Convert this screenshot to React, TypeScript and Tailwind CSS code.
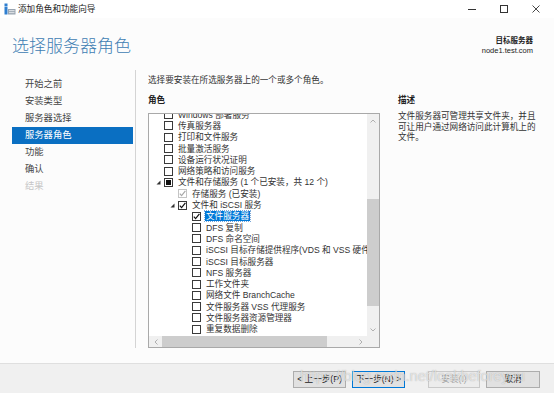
import React from "react";

type Row = {
  level: number;
  text: string;
  state?: "none" | "checked" | "indeterminate" | "disabledChecked";
  expander?: boolean;
  selected?: boolean;
};

const rows: Row[] = [
  { level: 0, text: "Windows 部署服务" },
  { level: 0, text: "传真服务器" },
  { level: 0, text: "打印和文件服务" },
  { level: 0, text: "批量激活服务" },
  { level: 0, text: "设备运行状况证明" },
  { level: 0, text: "网络策略和访问服务" },
  { level: 0, text: "文件和存储服务 (1 个已安装，共 12 个)", state: "indeterminate", expander: true },
  { level: 1, text: "存储服务 (已安装)", state: "disabledChecked" },
  { level: 1, text: "文件和 iSCSI 服务", state: "checked", expander: true },
  { level: 2, text: "文件服务器", state: "checked", selected: true },
  { level: 2, text: "DFS 复制" },
  { level: 2, text: "DFS 命名空间" },
  { level: 2, text: "iSCSI 目标存储提供程序(VDS 和 VSS 硬件提供程序)" },
  { level: 2, text: "iSCSI 目标服务器" },
  { level: 2, text: "NFS 服务器" },
  { level: 2, text: "工作文件夹" },
  { level: 2, text: "网络文件 BranchCache" },
  { level: 2, text: "文件服务器 VSS 代理服务" },
  { level: 2, text: "文件服务器资源管理器" },
  { level: 2, text: "重复数据删除" },
];

const padByLevel = ["pl-[4px]", "pl-[18px]", "pl-[32px]"];

function Check({ color }: { color: string }) {
  return (
    <svg width="9" height="9" viewBox="0 0 9 9" className="absolute left-[-1px] top-[-1px]">
      <path d="M1.8 4.6 L3.6 6.6 L7.4 1.8" fill="none" stroke={color} strokeWidth="1.2" />
    </svg>
  );
}

function CheckBox({ state }: { state: Row["state"] }) {
  if (state === "disabledChecked") {
    return (
      <div className="relative w-[9px] h-[9px] border border-[#c4c4c4] bg-white shrink-0">
        <Check color="#a8a8a8" />
      </div>
    );
  }
  return (
    <div className="relative w-[9px] h-[9px] border border-[#3a3a3a] bg-white shrink-0 flex items-center justify-center">
      {state === "checked" && <Check color="#111111" />}
      {state === "indeterminate" && <div className="w-[5px] h-[5px] bg-[#111111]" />}
    </div>
  );
}

function Expander({ show }: { show?: boolean }) {
  return (
    <div className="w-[11px] h-full flex items-center shrink-0">
      {show && (
        <svg width="5" height="5" viewBox="0 0 5 5" className="ml-[3px]">
          <polygon points="4.5,0.5 4.5,4.5 0.5,4.5" fill="#333333" />
        </svg>
      )}
    </div>
  );
}

export default function App() {
  return (
    <div
      className="relative w-[554px] h-[393px] flex flex-col bg-[#fcfcfc] text-[#1e1e1e] overflow-hidden"
      style={{ fontFamily: '"Liberation Sans", "Noto Sans CJK SC", sans-serif' }}
    >
      {/* Title bar */}
      <div className="h-[18px] bg-white flex items-center shrink-0">
        <svg width="12" height="12" viewBox="0 0 12 12" className="ml-[4px] mr-[2px]">
          <rect x="0.5" y="0.5" width="3" height="3" fill="#2f7fd0" />
          <rect x="0.5" y="4" width="3" height="7.5" fill="#2f7fd0" />
          <rect x="4" y="6" width="7.5" height="5.5" fill="#9aa5b1" />
          <rect x="5" y="7" width="5.5" height="1.2" fill="#d8dde2" />
          <rect x="5" y="9" width="5.5" height="1.2" fill="#d8dde2" />
        </svg>
        <span className="text-[8.6px] leading-none text-[#222]">添加角色和功能向导</span>
        <div className="ml-auto flex items-center h-full">
          <div className="w-[32px] h-full flex items-center justify-center">
            <div className="w-[8px] h-[1px] bg-[#333]" />
          </div>
          <div className="w-[32px] h-full flex items-center justify-center">
            <div className="w-[8px] h-[8px] border border-[#333]" />
          </div>
          <div className="w-[32px] mr-[2px] h-full flex items-center justify-center">
            <svg width="8" height="8" viewBox="0 0 8 8">
              <path d="M0.5 0.5 L7.5 7.5 M7.5 0.5 L0.5 7.5" stroke="#333" strokeWidth="0.9" />
            </svg>
          </div>
        </div>
      </div>

      {/* Header */}
      <div className="h-[52px] flex justify-between shrink-0">
        <div className="pl-[12px] pt-[19px] text-[17px] leading-[20px] font-light text-[#3f80b3]">选择服务器角色</div>
        <div className="pr-[21px] pt-[18px] flex flex-col items-end text-[7.5px] leading-[10px] text-[#222]">
          <span className="font-bold">目标服务器</span>
          <span>node1.test.com</span>
        </div>
      </div>

      {/* Body */}
      <div className="flex flex-1 min-h-0 pb-[15px]">
        {/* Nav */}
        <div className="w-[136px] shrink-0 pl-[12px] pr-[2px] pt-[6px] border-r border-[#d4d4d4]">
          {[
            { t: "开始之前" },
            { t: "安装类型" },
            { t: "服务器选择" },
            { t: "服务器角色", sel: true },
            { t: "功能" },
            { t: "确认" },
            { t: "结果", dim: true },
          ].map((it) => (
            <div
              key={it.t}
              className={
                "h-[17px] flex items-center pl-[13px] text-[9.3px] " +
                (it.sel ? "bg-[#0a6fc2] text-white" : it.dim ? "text-[#c6c6c6]" : "text-[#444]")
              }
            >
              {it.t}
            </div>
          ))}
        </div>

        {/* Main */}
        <div className="flex-1 pl-[12px] pt-[4px] flex flex-col min-w-0">
          <div className="h-[12px] flex items-center text-[8.6px] text-[#333]">
            选择要安装在所选服务器上的一个或多个角色。
          </div>
          <div className="flex flex-1 min-h-0 mt-[8px]">
            {/* Roles column */}
            <div className="w-[232px] shrink-0 flex flex-col">
              <div className="h-[12px] flex items-center text-[8.6px] font-bold text-[#222]">角色</div>
              <div className="mt-[7px] flex-1 min-h-0 border border-[#a9a9a9] bg-white flex flex-col">
                <div className="flex flex-1 min-h-0">
                  <div className="flex-1 min-w-0 overflow-hidden">
                    <div className="mt-[-5px]">
                      {rows.map((r, i) => (
                        <div
                          key={i}
                          className={"h-[11.3px] flex items-center whitespace-nowrap text-[8.6px] " + padByLevel[r.level]}
                        >
                          <Expander show={r.expander} />
                          <CheckBox state={r.state} />
                          <span
                            className={
                              "ml-[4px] leading-[10px] px-[1px] " +
                              (r.selected
                                ? "bg-[#0078d7] text-white outline outline-1 outline-dotted outline-[#7aa8d8]"
                                : "text-[#333]")
                            }
                          >
                            {r.text}
                          </span>
                        </div>
                      ))}
                    </div>
                  </div>
                  {/* vertical scrollbar */}
                  <div className="w-[12px] shrink-0 bg-[#f0f0f0] flex flex-col">
                    <div className="h-[14px] flex items-center justify-center">
                      <svg width="6" height="4" viewBox="0 0 6 4">
                        <path d="M0.5 3.5 L3 1 L5.5 3.5" fill="none" stroke="#a0a0a0" strokeWidth="0.8" />
                      </svg>
                    </div>
                    <div className="h-[71px]" />
                    <div className="h-[107px] bg-[#cdcdcd]" />
                    <div className="flex-1 flex items-end justify-center pb-[4px]">
                      <svg width="6" height="4" viewBox="0 0 6 4">
                        <path d="M0.5 0.5 L3 3 L5.5 0.5" fill="none" stroke="#a0a0a0" strokeWidth="0.8" />
                      </svg>
                    </div>
                  </div>
                </div>
                {/* horizontal scrollbar */}
                <div className="h-[11px] shrink-0 flex bg-[#f0f0f0]">
                  <div className="w-[13px] flex items-center justify-center">
                    <svg width="4" height="6" viewBox="0 0 4 6">
                      <path d="M3.5 0.5 L1 3 L3.5 5.5" fill="none" stroke="#a0a0a0" strokeWidth="0.8" />
                    </svg>
                  </div>
                  <div className="w-[165px] bg-[#cdcdcd]" />
                  <div className="flex-1 flex items-center justify-end pr-[4px]">
                    <svg width="4" height="6" viewBox="0 0 4 6">
                      <path d="M0.5 0.5 L3 3 L0.5 5.5" fill="none" stroke="#a0a0a0" strokeWidth="0.8" />
                    </svg>
                  </div>
                  <div className="w-[12px] bg-[#f0f0f0]" />
                </div>
              </div>
            </div>

            {/* Description column */}
            <div className="ml-[18px] flex-1 flex flex-col text-[8.6px] text-[#333]">
              <div className="h-[12px] flex items-center font-bold text-[#222]">描述</div>
              <div className="mt-[5px] leading-[10.7px]">
                <div>文件服务器可管理共享文件夹，并且</div>
                <div>可让用户通过网络访问此计算机上的</div>
                <div>文件。</div>
              </div>
            </div>
          </div>
        </div>
      </div>

      {/* Footer */}
      <div className="h-[30px] shrink-0 border-t border-[#dfdfdf] bg-[#f0f0f0] flex items-start justify-end pt-[7px] pr-[14px] text-[8.6px]">
        <button className="w-[53px] h-[17px] bg-[#e1e1e1] border border-[#adadad] text-[#222] flex items-center justify-center">
          &lt; 上一步(P)
        </button>
        <button className="ml-[6px] w-[53px] h-[17px] bg-[#e1e1e1] border border-[#0078d7] text-[#222] flex items-center justify-center">
          下一步(N) &gt;
        </button>
        <button className="ml-[23px] w-[52px] h-[17px] bg-[#ececec] border border-[#c9c9c9] text-[#a3a3a3] flex items-center justify-center">
          安装(I)
        </button>
        <button className="ml-[6px] w-[54px] h-[17px] bg-[#e1e1e1] border border-[#adadad] text-[#222] flex items-center justify-center">
          取消
        </button>
      </div>

      {/* Watermark */}
      <div className="absolute left-[300px] top-[369px] text-[14.5px] leading-none text-white/60 [text-shadow:0_0_1px_rgba(110,110,110,0.55)] pointer-events-none whitespace-nowrap">
        https://blog.csdn.net/lookbeforeyou
      </div>
    </div>
  );
}
